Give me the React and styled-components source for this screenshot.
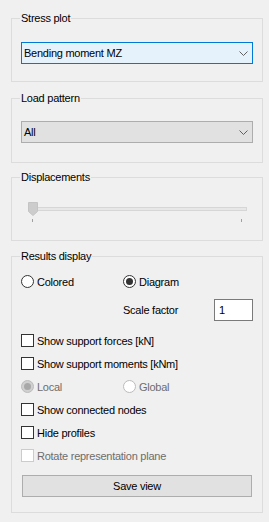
import React from 'react';
import styled, { createGlobalStyle } from 'styled-components';

const GlobalStyle = createGlobalStyle`
  html, body {
    margin: 0;
    padding: 0;
    background: #f0f0f0;
  }
  body {
    font-family: "Liberation Sans", Arial, sans-serif;
    font-size: 11px;
    color: #000;
  }
`;

const Panel = styled.div`
  width: 269px;
  height: 522px;
  box-sizing: border-box;
  padding: 12px 6px 0 11px;
  display: flex;
  flex-direction: column;
  background: #f0f0f0;
  letter-spacing: -0.25px;
`;

const Group = styled.fieldset`
  margin: ${p => p.$top || 0}px 0 0 0;
  padding: ${p => p.$pt}px 9px ${p => p.$pb}px 9px;
  border: 1px solid #dcdcdc;
  min-width: 0;
`;

const Legend = styled.legend`
  padding: 0 1px;
  margin-left: -1px;
  line-height: 13px;
  font-size: 11px;
`;

const Combo = styled.div`
  height: 22px;
  box-sizing: border-box;
  display: flex;
  align-items: center;
  justify-content: space-between;
  padding-left: 2px;
  border: 1px solid ${p => (p.$active ? '#0078d7' : '#adadad')};
  background: ${p => (p.$active ? '#e5f1fb' : '#e1e1e1')};
`;

const Chevron = styled.svg`
  margin-right: 4px;
`;

const SliderBox = styled.div`
  position: relative;
  height: 40px;
`;

const Track = styled.div`
  position: absolute;
  left: 9px;
  top: 23px;
  width: 217px;
  height: 4px;
  box-sizing: border-box;
  border: 1px solid #d6d6d6;
  background: #e7e7e7;
`;

const Tick = styled.div`
  position: absolute;
  top: 35px;
  left: ${p => p.$x}px;
  width: 1px;
  height: 3px;
  background: #a0a0a0;
`;

const Thumb = styled.svg`
  position: absolute;
  left: 7px;
  top: 18px;
`;

const Row = styled.div`
  display: grid;
  grid-template-columns: 102px 1fr;
  align-items: center;
  height: ${p => p.$h || 23}px;
  margin-top: ${p => p.$mt || 0}px;
`;

const Option = styled.label`
  display: flex;
  align-items: center;
  gap: 3px;
  white-space: nowrap;
  color: ${p => (p.$disabled ? '#6d6d6d' : '#000')};
`;

const Radio = styled.span`
  flex-shrink: 0;
  width: 13px;
  height: 13px;
  box-sizing: border-box;
  border-radius: 50%;
  border: 1px solid ${p => (p.$disabled ? '#bcbcbc' : '#333')};
  background: ${p => (p.$disabled && p.$checked ? '#d0d0d0' : '#fff')};
  display: flex;
  align-items: center;
  justify-content: center;
  &::after {
    content: '';
    display: ${p => (p.$checked ? 'block' : 'none')};
    width: 7px;
    height: 7px;
    border-radius: 50%;
    background: ${p => (p.$disabled ? '#a8a8a8' : '#333')};
  }
`;

const Check = styled.span`
  flex-shrink: 0;
  width: 13px;
  height: 13px;
  box-sizing: border-box;
  border: 1px solid ${p => (p.$disabled ? '#cccccc' : '#333')};
  background: #fff;
`;

const ScaleLabel = styled.span`
  grid-column: 2;
  display: flex;
  align-items: center;
  justify-content: space-between;
`;

const TextBox = styled.div`
  width: 39px;
  height: 22px;
  box-sizing: border-box;
  border: 1px solid #7a7a7a;
  background: #fff;
  display: flex;
  align-items: center;
  padding-left: 4px;
`;

const Button = styled.div`
  margin: 8px 1px 0 1px;
  height: 22px;
  box-sizing: border-box;
  border: 1px solid #adadad;
  background: #e1e1e1;
  display: flex;
  align-items: center;
  justify-content: center;
`;

function ComboBox({ value, active }) {
  return (
    <Combo $active={active}>
      <span>{value}</span>
      <Chevron width="9" height="5" viewBox="0 0 9 5">
        <path d="M0.5 0.5 L4.5 4.5 L8.5 0.5" fill="none" stroke="#606060" strokeWidth="1" />
      </Chevron>
    </Combo>
  );
}

function CheckRow({ label, disabled, mt }) {
  return (
    <Row $mt={mt}>
      <Option $disabled={disabled}>
        <Check $disabled={disabled} />
        {label}
      </Option>
    </Row>
  );
}

export default function App() {
  return (
    <>
      <GlobalStyle />
      <Panel>
        <Group $pt={17} $pb={17}>
          <Legend>Stress plot</Legend>
          <ComboBox value="Bending moment MZ" active />
        </Group>

        <Group $top={10} $pt={16} $pb={19}>
          <Legend>Load pattern</Legend>
          <ComboBox value="All" />
        </Group>

        <Group $top={8} $pt={0} $pb={16}>
          <Legend>Displacements</Legend>
          <SliderBox>
            <Track />
            <Tick $x={11} />
            <Tick $x={220} />
            <Thumb width="10" height="14" viewBox="0 0 10 14">
              <path d="M0.5 0.5 H9.5 V9.5 L5 13.5 L0.5 9.5 Z" fill="#cccccc" stroke="#c4c4c4" />
            </Thumb>
          </SliderBox>
        </Group>

        <Group $top={9} $pt={7} $pb={15}>
          <Legend>Results display</Legend>
          <Row>
            <Option>
              <Radio />
              Colored
            </Option>
            <Option>
              <Radio $checked />
              Diagram
            </Option>
          </Row>
          <Row $h={22} $mt={6}>
            <ScaleLabel>
              Scale factor
              <TextBox>1</TextBox>
            </ScaleLabel>
          </Row>
          <CheckRow label="Show support forces [kN]" mt={8} />
          <CheckRow label="Show support moments [kNm]" />
          <Row>
            <Option $disabled>
              <Radio $disabled $checked />
              Local
            </Option>
            <Option $disabled>
              <Radio $disabled />
              Global
            </Option>
          </Row>
          <CheckRow label="Show connected nodes" />
          <CheckRow label="Hide profiles" />
          <CheckRow label="Rotate representation plane" disabled />
          <Button>Save view</Button>
        </Group>
      </Panel>
    </>
  );
}
